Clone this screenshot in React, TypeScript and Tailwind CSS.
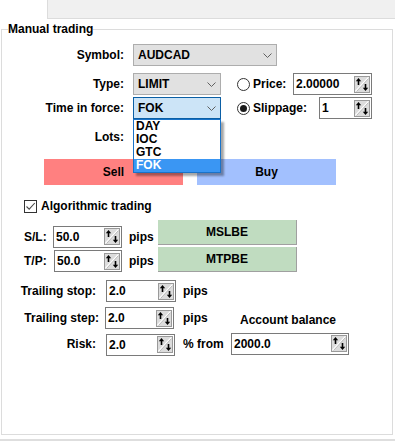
import React from "react";

const Chevron = () => (
  <svg width="9" height="5" viewBox="0 0 9 5" className="shrink-0">
    <polyline points="0.5,0.5 4.5,4.5 8.5,0.5" fill="none" stroke="#606060" strokeWidth="1" />
  </svg>
);

const Spin = () => (
  <svg width="16" height="17" viewBox="0 0 16 17" className="shrink-0">
    <rect x="0.5" y="0.5" width="15" height="16" fill="#dcdcdc" stroke="#9a9a9a" />
    <line x1="1.5" y1="15.5" x2="14.5" y2="1.5" stroke="#ffffff" strokeWidth="1.6" />
    <line x1="2.5" y1="15.5" x2="14.5" y2="2.5" stroke="#a8a8a8" strokeWidth="0.8" />
    <line x1="4.5" y1="4" x2="4.5" y2="9" stroke="#000" strokeWidth="1.6" />
    <polygon points="1.8,5.2 4.5,2 7.2,5.2" fill="#000" />
    <line x1="11.5" y1="8" x2="11.5" y2="13" stroke="#000" strokeWidth="1.6" />
    <polygon points="8.8,11.8 11.5,15 14.2,11.8" fill="#000" />
  </svg>
);

function Combo({ className, text, focused }: { className: string; text: string; focused?: boolean }) {
  return (
    <div
      className={`h-[22px] flex items-center justify-between pl-[4px] pr-[4px] border ${
        focused ? "bg-[#cce4f7] border-[#0b5fa5]" : "bg-[#e1e1e1] border-[#adadad]"
      } ${className}`}
    >
      <span className="leading-[14px]">{text}</span>
      <Chevron />
    </div>
  );
}

function NumBox({ className, value }: { className: string; value: string }) {
  return (
    <div
      className={`h-[22px] flex items-center justify-between pl-[2px] pr-[1px] border border-[#7a7a7a] bg-white ${className}`}
    >
      <span className="leading-[14px]">{value}</span>
      <Spin />
    </div>
  );
}

function Radio({ checked, className }: { checked?: boolean; className: string }) {
  return (
    <div
      className={`w-[13px] h-[13px] rounded-full border border-[#333333] bg-white flex items-center justify-center shrink-0 ${className}`}
    >
      {checked && <div className="w-[7px] h-[7px] rounded-full bg-[#1a1a1a]" />}
    </div>
  );
}

export default function App() {
  return (
    <div className="w-[395px] h-[441px] bg-white overflow-hidden font-['Liberation_Sans',Arial,sans-serif] font-bold text-[12px] text-black leading-[14px]">
      <div className="ml-[47px] h-[19px] bg-[#f0f0f0] border-l border-b border-[#dcdcdc]" />
      <div className="relative mt-[10px] ml-[1px] w-[392px] h-[406px] border border-[#dcdcdc]">
        <div className="absolute -top-[8px] left-[6px] bg-white leading-[14px]">Manual trading</div>

        {/* Symbol */}
        <div className="mt-[14px] flex items-center h-[22px]">
          <div className="w-[122px] text-right">Symbol:</div>
          <Combo className="ml-[9px] w-[144px]" text="AUDCAD" />
        </div>

        {/* Type / Price */}
        <div className="mt-[7px] flex items-center h-[22px]">
          <div className="w-[122px] text-right">Type:</div>
          <Combo className="ml-[9px] w-[88px]" text="LIMIT" />
          <Radio className="ml-[16px]" />
          <div className="ml-[3px] w-[40px]">Price:</div>
          <NumBox className="w-[79px]" value="2.00000" />
        </div>

        {/* Time in force / Slippage */}
        <div className="relative z-10 mt-[2px] flex items-center h-[22px]">
          <div className="w-[122px] text-right">Time in force:</div>
          <div className="relative ml-[9px]">
            <Combo className="w-[88px]" text="FOK" focused />
            <div className="absolute top-full left-0 w-[88px] border border-[#1a73c9] bg-white shadow-[3px_3px_2px_rgba(0,0,0,0.35)]">
              <div className="h-[13px] leading-[13px] pl-[2px]">DAY</div>
              <div className="h-[13px] leading-[13px] pl-[2px]">IOC</div>
              <div className="h-[13px] leading-[13px] pl-[2px]">GTC</div>
              <div className="h-[13px] leading-[13px] pl-[2px] bg-[#3a96f3] text-white">FOK</div>
            </div>
          </div>
          <Radio className="ml-[16px]" checked />
          <div className="ml-[3px] w-[66px]">Slippage:</div>
          <NumBox className="w-[53px]" value="1" />
        </div>

        {/* Lots */}
        <div className="mt-[7px] flex items-center h-[22px]">
          <div className="w-[122px] text-right">Lots:</div>
          <div className="ml-[9px] w-[80px] h-[22px] border border-[#7a7a7a] bg-white" />
        </div>

        {/* Sell / Buy */}
        <div className="mt-[11px] flex h-[26px]">
          <div className="ml-[42px] w-[139px] h-[26px] bg-[#ff8080] flex items-center justify-center">Sell</div>
          <div className="ml-[14px] w-[139px] h-[26px] bg-[#a2c0fe] flex items-center justify-center">Buy</div>
        </div>

        {/* Algorithmic trading */}
        <div className="mt-[14px] flex items-center h-[14px]">
          <div className="ml-[22px] w-[13px] h-[13px] border border-[#333333] bg-white flex items-center justify-center">
            <svg width="11" height="11" viewBox="0 0 11 11">
              <polyline points="1.5,5.5 4.2,8.2 9.8,2" fill="none" stroke="#4a4a4a" strokeWidth="1.1" />
            </svg>
          </div>
          <div className="ml-[4px]">Algorithmic trading</div>
        </div>

        {/* S/L */}
        <div className="mt-[7px] flex items-start">
          <div className="mt-[6px] flex items-center h-[21px]">
            <div className="ml-[22px] w-[29px]">S/L:</div>
            <NumBox className="w-[69px] h-[21px]" value="50.0" />
            <div className="ml-[7px] w-[29px]">pips</div>
          </div>
          <div className="w-[139px] h-[25px] bg-[#c0dcc0] border-r border-b border-[#a0a0a0] flex items-center justify-center">
            MSLBE
          </div>
        </div>

        {/* T/P */}
        <div className="flex items-start">
          <div className="mt-[3px] flex items-center h-[22px]">
            <div className="ml-[22px] w-[30px]">T/P:</div>
            <NumBox className="w-[68px]" value="50.0" />
            <div className="ml-[7px] w-[29px]">pips</div>
          </div>
          <div className="w-[139px] h-[25px] bg-[#c0dcc0] border-r border-b border-[#a0a0a0] flex items-center justify-center">
            MTPBE
          </div>
        </div>

        {/* Trailing stop */}
        <div className="mt-[8px] flex items-center h-[22px]">
          <div className="w-[94px] text-right">Trailing stop:</div>
          <NumBox className="ml-[10px] w-[70px]" value="2.0" />
          <div className="ml-[7px]">pips</div>
        </div>

        {/* Trailing step */}
        <div className="mt-[5px] flex items-center h-[22px]">
          <div className="w-[97px] text-right">Trailing step:</div>
          <NumBox className="ml-[6px] w-[69px]" value="2.0" />
          <div className="ml-[9px] w-[57px]">pips</div>
          <div className="mt-[3px]">Account balance</div>
        </div>

        {/* Risk */}
        <div className="mt-[3px] flex items-center h-[23px]">
          <div className="w-[94px] text-right">Risk:</div>
          <NumBox className="ml-[10px] w-[69px] mt-[2px]" value="2.0" />
          <div className="ml-[8px] w-[48px]">% from</div>
          <NumBox className="w-[118px]" value="2000.0" />
        </div>
      </div>
      <div className="mt-[4px] h-[2px] bg-[#dedede]" />
    </div>
  );
}
